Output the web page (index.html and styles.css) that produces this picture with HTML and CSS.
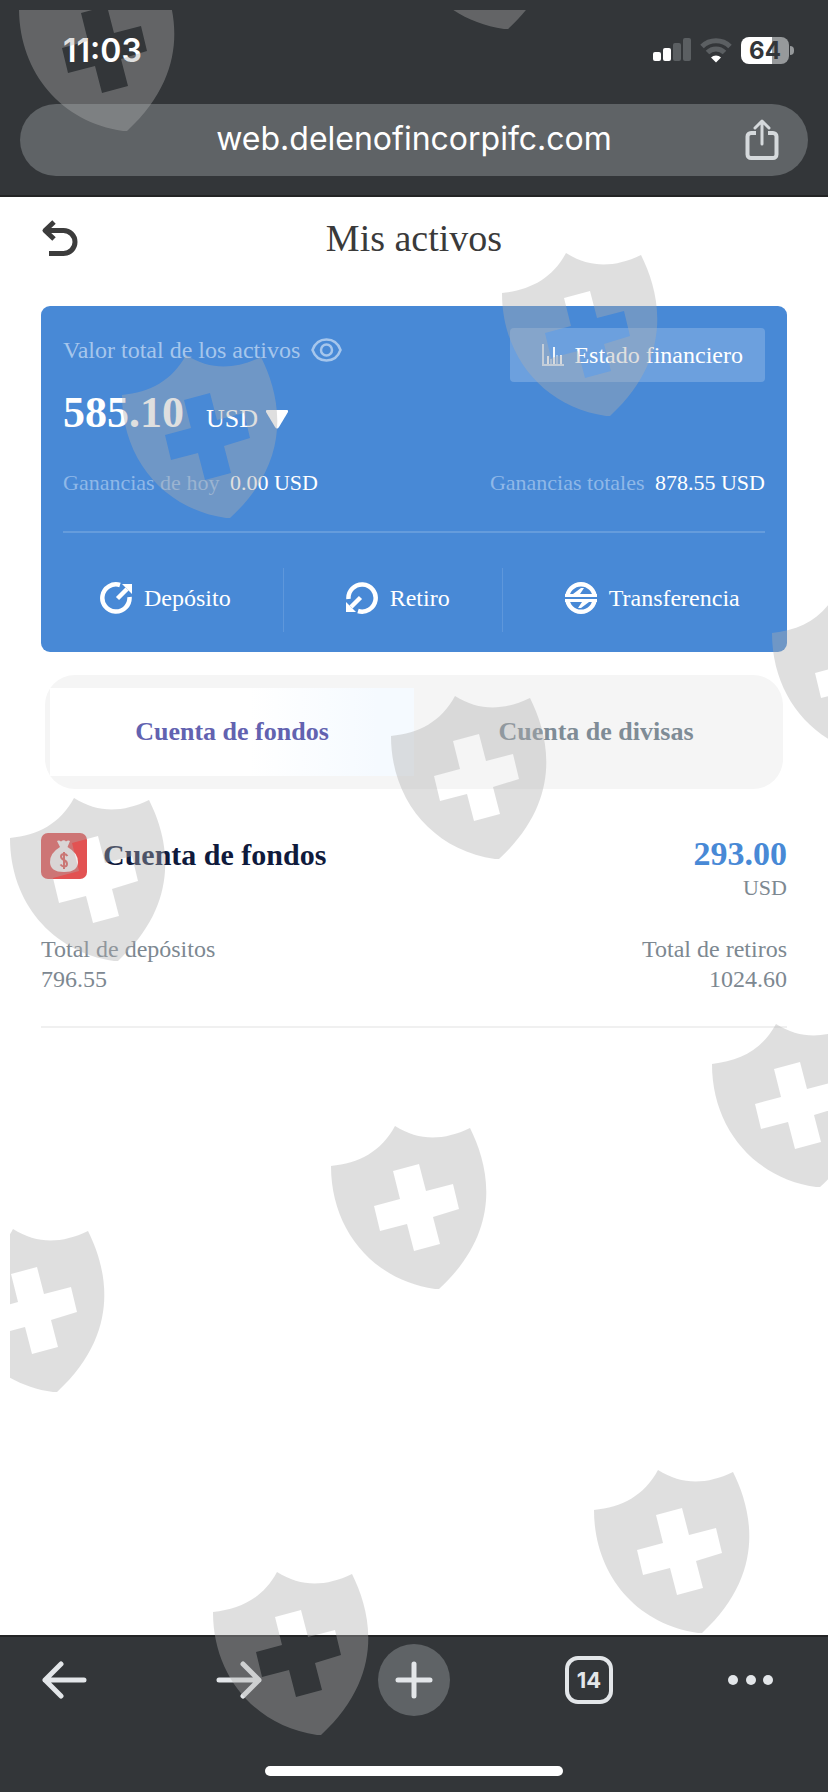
FILE: index.html
```html
<!DOCTYPE html>
<html lang="es">
<head>
    <meta charset="UTF-8">
    <meta name="viewport" content="width=device-width, initial-scale=1.0">
    <title>Mis activos</title>
    <link rel="stylesheet" href="styles.css">
</head>
<body>
    <header class="browser-top">
        <div class="status-bar">
            <span class="time">11:03</span>
            <div class="status-icons">
                <svg width="38" height="24" viewBox="0 0 38 24">
                    <rect x="0" y="14" width="8" height="9" rx="2" fill="#fff"/>
                    <rect x="10" y="10" width="8" height="13" rx="2" fill="#fff"/>
                    <rect x="20" y="5" width="8" height="18" rx="2" fill="#5b5f62"/>
                    <rect x="30" y="0" width="8" height="23" rx="2" fill="#5b5f62"/>
                </svg>
                <svg width="32" height="25" viewBox="0 0 32 25">
                    <path d="M2 8.500a20 20 0 0 1 28 0" fill="none" stroke="#5b5f62" stroke-width="5"/>
                    <path d="M7.500 14.500a12 12 0 0 1 17 0" fill="none" stroke="#5b5f62" stroke-width="5"/>
                    <path d="M16 24.500l-5-5a7 7 0 0 1 10 0z" fill="#fff"/>
                </svg>
                <span class="battery">64</span>
            </div>
        </div>
        <div class="url-bar">
            <input class="url" type="text" value="web.delenofincorpifc.com" aria-label="Dirección" readonly>
            <button class="icon-btn share" aria-label="Compartir">
                <svg width="34" height="42" viewBox="0 0 34 42" fill="none" stroke="#d5d9dc" stroke-linecap="round" stroke-linejoin="round">
                    <path d="M11 14H6a3.500 3.500 0 0 0-3.500 3.500v18A3.500 3.500 0 0 0 6 39h22a3.500 3.500 0 0 0 3.500-3.500v-18A3.500 3.500 0 0 0 28 14h-5" stroke-width="4" stroke-linecap="butt"/>
                    <path d="M17 25V3M10 9l7-7 7 7" stroke-width="3"/>
                </svg>
            </button>
        </div>
    </header>

    <main class="page">
        <div class="page-header">
            <button class="icon-btn" aria-label="Volver">
                <svg width="38" height="38" viewBox="0 0 38 38" fill="none" stroke="#3c3c3c" stroke-width="5" stroke-linejoin="round">
                    <path d="M13 3L4 11.500l9 8.500M4 11.500h18.500a11.500 11.500 0 0 1 0 23H8"/>
                </svg>
            </button>
            <h1>Mis activos</h1>
        </div>

        <section class="card">
            <div class="card-top">
                <div class="card-label">
                    <span>Valor total de los activos</span>
                    <svg width="31" height="24" viewBox="0 0 31 24" fill="none" stroke="currentColor" stroke-width="2.500">
                        <path d="M1.500 12C4 5 9.500 1.500 15.500 1.500S27 5 29.500 12c-2.500 7-8 10.500-14 10.500S4 19 1.500 12z"/>
                        <circle cx="15.500" cy="12" r="5.500"/>
                    </svg>
                </div>
                <button class="report-btn">
                    <svg width="22" height="22" viewBox="0 0 22 22" fill="none" stroke="#fff" stroke-width="2">
                        <path d="M1 0v21h21" opacity=".7"/>
                        <path d="M6 12v8M12 3v17M19 11v9" opacity=".9"/>
                        <path d="M9 15v5M15 11v9" opacity=".4"/>
                    </svg>
                    Estado financiero
                </button>
            </div>
            <div class="balance">
                <strong>585.10</strong>
                <button class="currency">
                    USD
                    <svg width="22" height="19" viewBox="0 0 22 19"><path d="M1 0h20q1.500 0 1 2l-9 15q-2 3-4 0L0 2q-.5-2 1-2z" fill="#fff"/></svg>
                </button>
            </div>
            <div class="earnings">
                <p>Ganancias de hoy <span>0.00 USD</span></p>
                <p>Ganancias totales <span>878.55 USD</span></p>
            </div>
            <div class="actions">
                <button class="action">
                    <svg width="32" height="32" viewBox="0 0 32 32">
                        <path d="M20 3A13.600 13.600 0 1 0 29.500 15" fill="none" stroke="#fff" stroke-width="4.500"/>
                        <path d="M17.500 16.500L27 7" stroke="#fff" stroke-width="4.500"/>
                        <path d="M22 2h10v10z" fill="#fff"/>
                    </svg>
                    Depósito
                </button>
                <button class="action">
                    <svg width="32" height="32" viewBox="0 0 32 32">
                        <g transform="rotate(180 16 16)">
                            <path d="M20 3A13.600 13.600 0 1 0 29.500 15" fill="none" stroke="#fff" stroke-width="4.500"/>
                            <path d="M17.500 16.500L27 7" stroke="#fff" stroke-width="4.500"/>
                            <path d="M22 2h10v10z" fill="#fff"/>
                        </g>
                    </svg>
                    Retiro
                </button>
                <button class="action">
                    <svg width="32" height="32" viewBox="0 0 32 32">
                        <circle cx="16" cy="16" r="13.800" fill="none" stroke="#fff" stroke-width="4.400"/>
                        <path d="M0 16h32" stroke="#4889d6" stroke-width="2"/>
                        <path d="M0 15v-3h8l8-6h3l-4 6h17v3zM32 17v3h-8l-8 6h-3l4-6H0v-3z" fill="#fff"/>
                    </svg>
                    Transferencia
                </button>
            </div>
        </section>

        <div class="tabs">
            <button class="tab active">Cuenta de fondos</button>
            <button class="tab">Cuenta de divisas</button>
        </div>

        <section class="account">
            <div class="account-row">
                <div class="account-name">
                    <svg width="46" height="46" viewBox="0 0 46 46">
                        <rect width="46" height="46" rx="7" fill="#e25252"/>
                        <path d="M16 8q2-1 4 .5Q23 6 25 8.500q2-1.500 4-.5l-2.500 6q10.500 6 10.500 15 0 10-14 10T9 29q0-9 10-15z" fill="#f5eeee"/>
                        <path d="M26.500 23q-1.500-2-3.500-2-3 0-3 2.500 0 2 3 3.500t3 4q0 2.500-3 2.500-2 0-3.500-2M23 19v17" fill="none" stroke="#dc5552" stroke-width="2"/>
                    </svg>
                    <h2>Cuenta de fondos</h2>
                </div>
                <div class="account-balance">
                    <strong>293.00</strong>
                    <span>USD</span>
                </div>
            </div>
            <div class="totals">
                <div>
                    <p>Total de depósitos</p>
                    <p>796.55</p>
                </div>
                <div class="right">
                    <p>Total de retiros</p>
                    <p>1024.60</p>
                </div>
            </div>
        </section>
    </main>

    <footer class="browser-bottom">
        <nav class="toolbar">
            <button class="icon-btn" aria-label="Atrás">
                <svg width="46" height="38" viewBox="0 0 46 38" fill="none" stroke="#e3e6e9" stroke-width="5" stroke-linecap="round" stroke-linejoin="round">
                    <path d="M20 3L4 19l16 16M4 19h39"/>
                </svg>
            </button>
            <button class="icon-btn" aria-label="Adelante">
                <svg width="46" height="38" viewBox="0 0 46 38" fill="none" stroke="#e3e6e9" stroke-width="5" stroke-linecap="round" stroke-linejoin="round">
                    <path d="M27 3l16 16-16 16M43 19H3"/>
                </svg>
            </button>
            <button class="icon-btn new-tab" aria-label="Nueva pestaña">
                <svg width="38" height="38" viewBox="0 0 38 38" fill="none" stroke="#e3e6e9" stroke-width="5" stroke-linecap="round">
                    <path d="M19 3v32M3 19h32"/>
                </svg>
            </button>
            <button class="icon-btn" aria-label="Pestañas"><span class="tab-count">14</span></button>
            <button class="icon-btn more" aria-label="Más">
                <svg width="46" height="12" viewBox="0 0 46 12" fill="#e3e6e9">
                    <circle cx="5" cy="6" r="5"/>
                    <circle cx="23" cy="6" r="5"/>
                    <circle cx="40" cy="6" r="5"/>
                </svg>
            </button>
        </nav>
        <div class="home-indicator"></div>
    </footer>

    <!-- shield watermark over the whole screen -->
    <svg class="watermark" width="818" height="1782" viewBox="10 10 818 1782" aria-hidden="true">
        <defs>
            <path id="shield" fill-rule="evenodd" d="M0 40C28 37 50 26 64 0c24 15 48 15 75 2C158 40 173 103 108 163h-4C42 154 0 104 0 40zM62 45l7 28-26 7 6 25 27-7 7 27 26-7-7-27 26-8-6-25-27 7-7-27z"/>
        </defs>
        <use href="#shield" x="19" y="-32"/>
        <use href="#shield" x="400" y="-134"/>
        <use href="#shield" x="502" y="253"/>
        <use href="#shield" x="122" y="355"/>
        <use href="#shield" x="772" y="593"/>
        <use href="#shield" x="391" y="696"/>
        <use href="#shield" x="10" y="798"/>
        <use href="#shield" x="712" y="1024"/>
        <use href="#shield" x="331" y="1126"/>
        <use href="#shield" x="-51" y="1229"/>
        <use href="#shield" x="594" y="1470"/>
        <use href="#shield" x="213" y="1572"/>
    </svg>
</body>
</html>
```
FILE: styles.css
```css
:root {
    --blue: #4889d6;
    --bar: #333639;
    --pill: #5f6366;
    --grey: #7d8891;
    --icon: #e3e6e9;
}
* {
    box-sizing: border-box;
}
body {
    margin: 0;
    min-height: 100vh;
    position: relative;
    display: flex;
    flex-direction: column;
    background: #fff;
    font-family: "Liberation Serif", "Times New Roman", serif;
}
h1, h2, p {
    margin: 0;
}
button {
    border: none;
    background: none;
    padding: 0;
    font: inherit;
    color: inherit;
    cursor: pointer;
}
svg {
    display: block;
    flex: none;
}
.icon-btn {
    display: flex;
    align-items: center;
    justify-content: center;
}

/* browser chrome */
.browser-top {
    background: var(--bar);
    border-bottom: 2px solid #232425;
    padding-bottom: 19px;
    font-family: Inter, sans-serif;
}
.status-bar {
    height: 104px;
    padding: 0 34px 4px 63px;
    display: flex;
    align-items: center;
    justify-content: space-between;
    color: #fff;
}
.time {
    font-size: 32px;
    font-weight: 600;
}
.status-icons {
    display: flex;
    align-items: center;
    gap: 9px;
}
.battery {
    position: relative;
    width: 48px;
    height: 27px;
    margin-right: 5px;
    border-radius: 8px;
    background: linear-gradient(90deg, #fff 65%, #96999b 65%);
    color: var(--bar);
    font-size: 24px;
    font-weight: 700;
    line-height: 27px;
    text-align: center;
}
.battery::after {
    content: '';
    position: absolute;
    right: -5px;
    top: 9px;
    width: 4px;
    height: 9px;
    border-radius: 0 4px 4px 0;
    background: #96999b;
}
.url-bar {
    height: 72px;
    margin: 0 20px;
    padding-left: 92px;
    display: flex;
    align-items: center;
    background: var(--pill);
    border-radius: 36px;
}
.url {
    flex: 1;
    min-width: 0;
    border: none;
    padding: 0 0 3px;
    background: none;
    color: #fff;
    font-family: Inter, sans-serif;
    font-size: 32px;
    text-align: center;
    outline: none;
}
.share {
    width: 92px;
    height: 72px;
}

/* page */
.page {
    flex: 1;
    padding: 0 41px;
}
.page-header {
    height: 82px;
    margin-bottom: 27px;
    display: grid;
    grid-template-columns: 38px 1fr 38px;
    align-items: center;
}
.page-header h1 {
    font-size: 38px;
    font-weight: 400;
    color: #3a3a3a;
    text-align: center;
}
.card {
    background: var(--blue);
    border-radius: 9px;
    padding: 22px 22px 20px;
    color: #fff;
}
.card-top {
    display: flex;
    justify-content: space-between;
    align-items: flex-start;
}
.card-label {
    height: 44px;
    display: flex;
    align-items: center;
    gap: 11px;
    font-size: 24px;
    color: #a6c6ec;
}
.report-btn {
    height: 54px;
    padding: 0 22px 0 32px;
    display: flex;
    align-items: center;
    gap: 10px;
    border-radius: 4px;
    background: rgba(255, 255, 255, 0.2);
    font-size: 24px;
}
.balance {
    height: 62px;
    display: flex;
    align-items: baseline;
    gap: 22px;
    line-height: 62px;
}
.balance strong {
    font-size: 44px;
}
.currency {
    display: flex;
    align-items: center;
    gap: 8px;
    font-size: 26px;
}
.earnings {
    margin-top: 24px;
    padding-bottom: 33px;
    display: flex;
    justify-content: space-between;
    border-bottom: 2px solid rgba(255, 255, 255, 0.16);
    font-size: 22px;
    line-height: 30px;
    color: #8fb8e8;
}
.earnings span {
    margin-left: 5px;
    color: #fff;
}
.actions {
    margin-top: 35px;
    height: 64px;
    display: flex;
}
.action {
    display: flex;
    align-items: center;
    gap: 12px;
    padding: 0 52px 4px 62px;
    font-size: 24px;
}
.action:first-child {
    padding-left: 37px;
}
.action + .action {
    border-left: 1px solid rgba(255, 255, 255, 0.12);
}
.action:last-child {
    padding-right: 0;
}

/* account tabs */
.tabs {
    margin: 23px 4px 0;
    padding: 13px 5px;
    display: flex;
    background: #f5f5f5;
    border-radius: 30px;
}
.tab {
    flex: 1;
    height: 88px;
    font-size: 26px;
    font-weight: 700;
    color: #7f8c96;
}
.tab.active {
    background: linear-gradient(90deg, #fff 55%, #f5faff 90%);
    color: #6262b0;
}
.account {
    margin-top: 44px;
    padding-bottom: 32px;
    border-bottom: 2px solid #f0f0f0;
}
.account-row, .totals {
    display: flex;
    justify-content: space-between;
    align-items: flex-start;
}
.account-name {
    display: flex;
    gap: 16px;
}
.account-name h2 {
    font-size: 30px;
    line-height: 44px;
    color: #0f1a3c;
}
.account-balance {
    display: flex;
    flex-direction: column;
    align-items: flex-end;
    font-size: 22px;
    line-height: 26px;
    color: var(--grey);
}
.account-balance strong {
    font-size: 34px;
    line-height: 42px;
    color: var(--blue);
}
.totals {
    margin-top: 33px;
    font-size: 24px;
    line-height: 30px;
    color: var(--grey);
}
.totals .right {
    text-align: right;
}

/* bottom toolbar */
.browser-bottom {
    padding: 7px 0 16px;
    background: var(--bar);
    border-top: 2px solid #232425;
}
.toolbar {
    display: flex;
    justify-content: space-between;
    padding: 0 54px 0 28px;
}
.toolbar .icon-btn {
    width: 72px;
    height: 72px;
}
.toolbar .more {
    width: 46px;
}
.new-tab {
    background: var(--pill);
    border-radius: 50%;
}
.tab-count {
    width: 48px;
    height: 48px;
    border: 4px solid var(--icon);
    border-radius: 13px;
    color: var(--icon);
    font-family: Inter, sans-serif;
    font-size: 22px;
    font-weight: 700;
    line-height: 41px;
    text-align: center;
}
.home-indicator {
    width: 36%;
    height: 10px;
    margin: 50px auto 0;
    border-radius: 5px;
    background: #fff;
}
.watermark {
    position: absolute;
    top: 10px;
    left: 10px;
    fill: #aeaeae;
    opacity: 0.39;
    pointer-events: none;
}
```
